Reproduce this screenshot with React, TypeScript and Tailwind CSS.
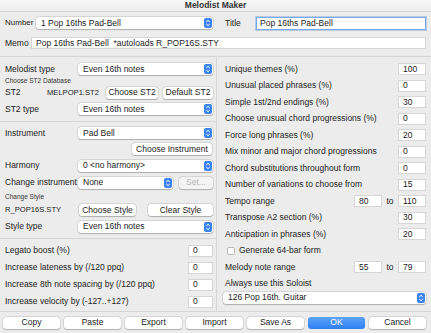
import React from 'react';

const font = { fontFamily: '"Liberation Sans", Arial, sans-serif' };

function Stepper() {
  return (
    <svg width="8" height="10" viewBox="0 0 8 10" className="shrink-0">
      <rect x="0" y="0" width="8" height="10" rx="2" fill="#3b83f0" />
      <polyline points="2.2,4 4,2.3 5.8,4" fill="none" stroke="white" strokeWidth="1" />
      <polyline points="2.2,6 4,7.7 5.8,6" fill="none" stroke="white" strokeWidth="1" />
    </svg>
  );
}

function Select({ value, className = '' }: { value: string; className?: string }) {
  return (
    <div
      className={`flex items-center h-[12px] bg-white rounded-[3px] pl-[5px] pr-[1px] shadow-[0_0_0_0.5px_rgba(0,0,0,0.15),0_0.5px_1px_rgba(0,0,0,0.2)] ${className}`}
    >
      <span className="flex-1 truncate">{value}</span>
      <Stepper />
    </div>
  );
}

function Btn({ label, className = '', disabled = false }: { label: string; className?: string; disabled?: boolean }) {
  return (
    <div
      className={`flex items-center justify-center h-[12px] rounded-[3px] whitespace-nowrap shadow-[0_0_0_0.5px_rgba(0,0,0,0.15),0_0.5px_1px_rgba(0,0,0,0.2)] ${
        disabled ? 'bg-[#f4f4f4] text-[#b4b4b4]' : 'bg-white'
      } ${className}`}
    >
      {label}
    </div>
  );
}

function Box({ value, className = '' }: { value: string; className?: string }) {
  return (
    <div className={`flex items-center h-[12px] bg-white border border-[#d6d6d6] pl-[4px] ${className}`}>
      {value}
    </div>
  );
}

const leftRows = [
  'Legato boost (%)',
  'Increase lateness by (/120 ppq)',
  'Increase 8th note spacing by (/120 ppq)',
  'Increase velocity by (-127..+127)',
];

const rightRows = [
  ['Unique themes (%)', '100'],
  ['Unusual placed phrases (%)', '0'],
  ['Simple 1st/2nd endings (%)', '30'],
  ['Choose unusual chord progressions (%)', '0'],
  ['Force long phrases (%)', '20'],
  ['Mix minor and major chord progressions', '0'],
  ['Chord substitutions throughout form', '0'],
  ['Number of variations to choose from', '15'],
];

export default function App() {
  return (
    <div
      style={font}
      className="w-[431px] h-[333px] bg-[#ececec] text-[8.5px] text-[#1c1c1c] flex flex-col overflow-hidden"
    >
      {/* Title bar */}
      <div className="h-[12px] flex items-center justify-center bg-gradient-to-b from-[#f8f8f8] to-[#ececec] border-b border-[#d4d4d4] font-bold text-[8.5px] text-[#333]">
        Melodist Maker
      </div>

      {/* Number / Title */}
      <div className="flex items-center h-[16px] mt-[3px] pl-[5px] pr-[5px]">
        <span className="w-[31px] text-[8px]">Number</span>
        <Select value="1 Pop 16ths Pad-Bell" className="w-[177px]" />
        <span className="ml-[12px] w-[31px]">Title</span>
        <div className="flex-1 flex items-center h-[13px] bg-white border border-[#7aa7e6] shadow-[0_0_0_1px_rgba(90,145,230,0.35)] pl-[3px]">
          Pop 16ths Pad-Bell
        </div>
      </div>

      {/* Memo */}
      <div className="flex items-center h-[16px] mt-[4px] pl-[5px] pr-[5px]">
        <span className="w-[26px]">Memo</span>
        <Box value="Pop 16ths Pad-Bell  *autoloads R_POP16S.STY" className="flex-1 whitespace-pre" />
      </div>

      {/* Main */}
      <div className="flex mt-[5px] border-t border-[#d6d6d6] h-[255px]">
        {/* Left column */}
        <div className="w-[217px] border-r border-[#d6d6d6] pl-[5px] pr-[3px] pt-[4px] flex flex-col">
          <div className="flex items-center h-[16px]">
            <span className="w-[73px]">Melodist type</span>
            <Select value="Even 16th notes" className="flex-1" />
          </div>
          <div className="h-[7px] flex items-center text-[6.5px] text-[#333]">Choose ST2 Database</div>
          <div className="flex items-center h-[17px]">
            <span className="w-[42px]">ST2</span>
            <span className="w-[59px] whitespace-nowrap text-[7.6px]">MELPOP1.ST2</span>
            <Btn label="Choose ST2" className="w-[52px]" />
            <Btn label="Default ST2" className="ml-[5px] flex-1" />
          </div>
          <div className="flex items-center h-[16px]">
            <span className="w-[73px]">ST2 type</span>
            <Select value="Even 16th notes" className="flex-1" />
          </div>
          <div className="h-[8px] flex items-center -ml-[5px] -mr-[3px]">
            <div className="w-full border-t border-[#d6d6d6]" />
          </div>
          <div className="flex items-center h-[16px]">
            <span className="w-[73px]">Instrument</span>
            <Select value="Pad Bell" className="flex-1" />
          </div>
          <div className="flex items-center justify-end h-[16px] pr-[1px]">
            <Btn label="Choose Instrument" className="w-[80px]" />
          </div>
          <div className="flex items-center h-[17px]">
            <span className="w-[73px]">Harmony</span>
            <Select value="0 <no harmony>" className="flex-1" />
          </div>
          <div className="flex items-center h-[17px]">
            <span className="w-[73px] whitespace-nowrap">Change instrument</span>
            <Select value="None" className="w-[95px]" />
            <Btn label="Set..." disabled className="ml-[6px] flex-1" />
          </div>
          <div className="h-[11px] flex items-center text-[6.5px] text-[#333]">Change Style</div>
          <div className="flex items-center h-[16px]">
            <span className="w-[74px] text-[7.6px] whitespace-nowrap">R_POP16S.STY</span>
            <Btn label="Choose Style" className="w-[57px]" />
            <Btn label="Clear Style" className="ml-[12px] flex-1" />
          </div>
          <div className="flex items-center h-[17px]">
            <span className="w-[73px]">Style type</span>
            <Select value="Even 16th notes" className="flex-1" />
          </div>
          <div className="h-[7px] flex items-center -ml-[5px] -mr-[3px]">
            <div className="w-full border-t border-[#d6d6d6]" />
          </div>
          {leftRows.map((r) => (
            <div key={r} className="flex items-center h-[17px]">
              <span className="flex-1 whitespace-nowrap">{r}</span>
              <Box value="0" className="w-[25px]" />
            </div>
          ))}
        </div>

        {/* Right column */}
        <div className="flex-1 pl-[8px] pr-[5px] pt-[4px] flex flex-col">
          {rightRows.map(([label, v]) => (
            <div key={label} className="flex items-center h-[16.5px]">
              <span className="flex-1 whitespace-nowrap">{label}</span>
              <Box value={v} className="w-[28px]" />
            </div>
          ))}
          <div className="flex items-center h-[16.5px]">
            <span className="flex-1">Tempo range</span>
            <Box value="80" className="w-[28px]" />
            <span className="w-[16px] text-center">to</span>
            <Box value="110" className="w-[28px]" />
          </div>
          <div className="flex items-center h-[16.5px]">
            <span className="flex-1">Transpose A2 section (%)</span>
            <Box value="30" className="w-[28px]" />
          </div>
          <div className="flex items-center h-[16.5px]">
            <span className="flex-1">Anticipation in phrases (%)</span>
            <Box value="20" className="w-[28px]" />
          </div>
          <div className="flex items-center h-[16.5px] pl-[2px]">
            <div className="w-[8px] h-[8px] bg-white border border-[#b8b8b8] rounded-[2px] mr-[4px]" />
            <span>Generate 64-bar form</span>
          </div>
          <div className="flex items-center h-[16.5px]">
            <span className="flex-1">Melody note range</span>
            <Box value="55" className="w-[28px]" />
            <span className="w-[16px] text-center">to</span>
            <Box value="79" className="w-[28px]" />
          </div>
          <div className="flex items-center h-[16px]">Always use this Soloist</div>
          <div className="flex items-center h-[12px] -ml-[2px]">
            <Select value="126 Pop 16th. Guitar" className="w-full" />
          </div>
        </div>
      </div>

      {/* Bottom buttons */}
      <div className="flex items-center gap-[4px] pl-[3px] pr-[5px] border-t border-[#d6d6d6] flex-1">
        {['Copy', 'Paste', 'Export', 'Import', 'Save As'].map((b) => (
          <Btn key={b} label={b} className="flex-1" />
        ))}
        <div className="flex-1 flex items-center justify-center h-[12px] rounded-[3px] bg-gradient-to-b from-[#5aa2fb] to-[#2d7ff0] text-white">
          OK
        </div>
        <Btn label="Cancel" className="flex-1" />
      </div>
    </div>
  );
}
